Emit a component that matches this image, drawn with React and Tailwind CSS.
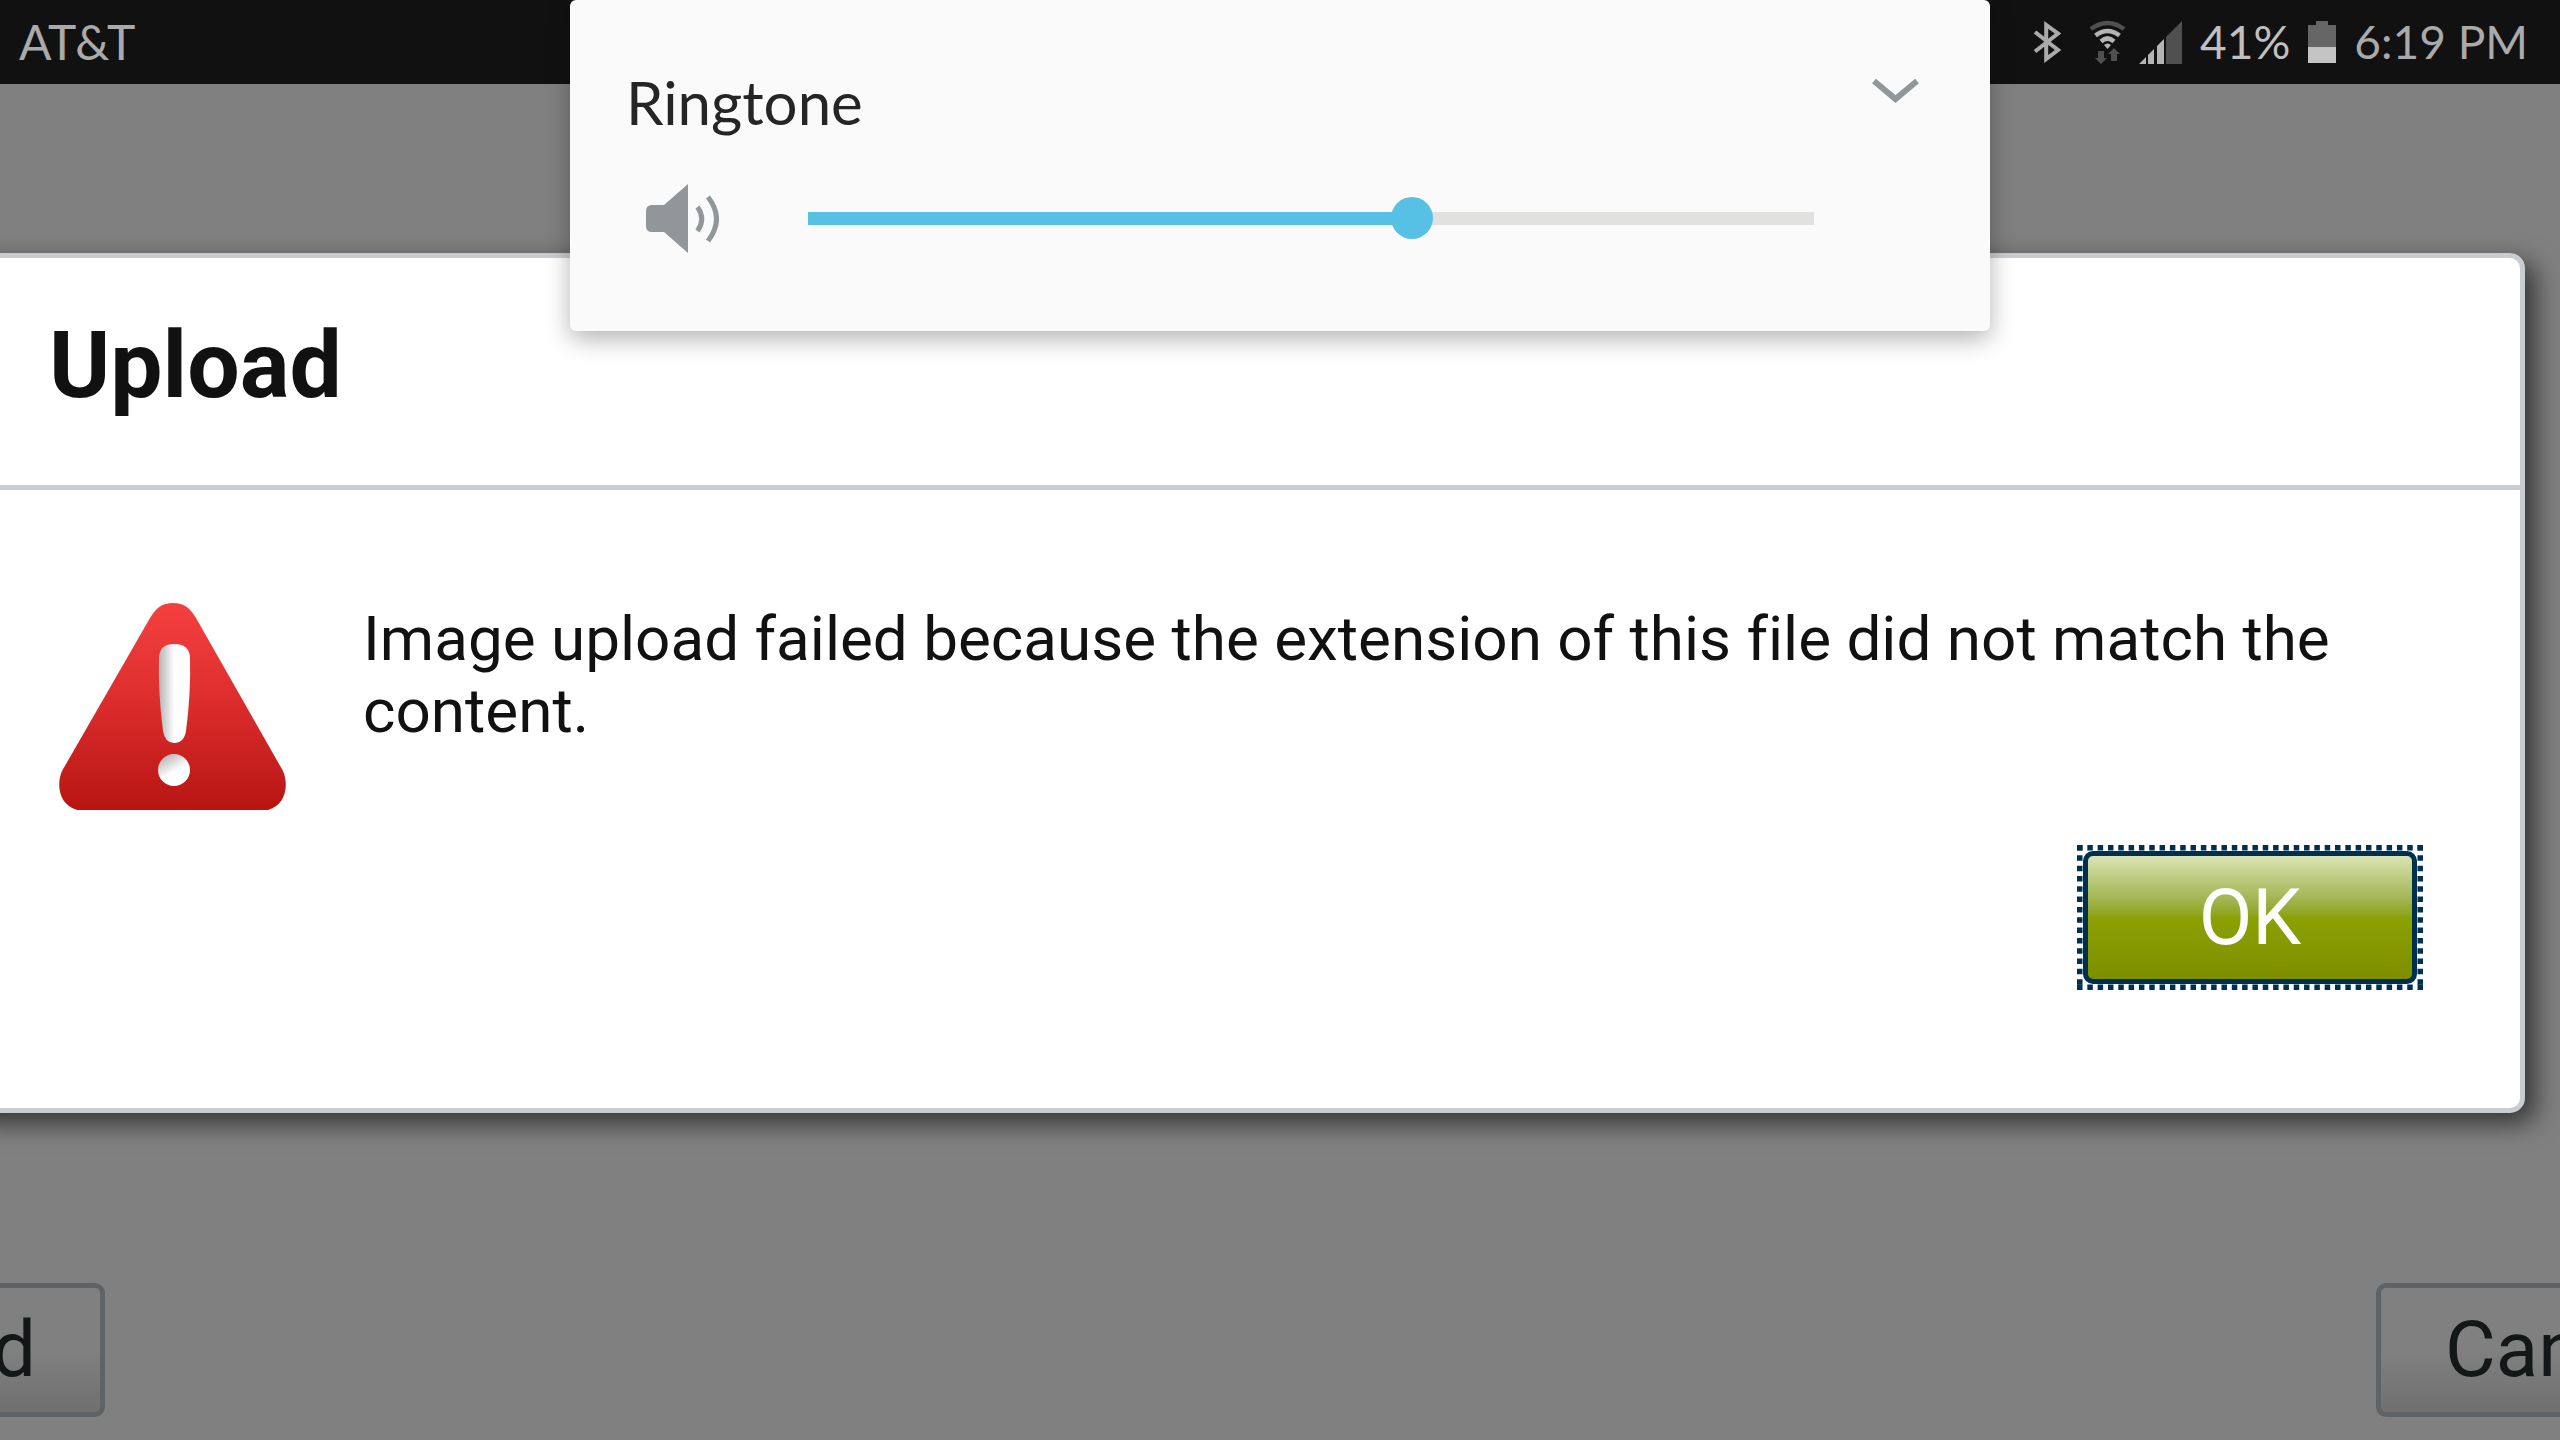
import { useState } from "react";

const STEPS = 15;

function BluetoothIcon() {
  return (
    <svg className="w-[28px] h-[42px]" viewBox="0 0 28 42" fill="none" stroke="#aaaaaa" strokeWidth="4">
      <path d="M2 11 L25 29 L13.200 38 V4 L25 12.500 L2 30.500"/>
    </svg>
  );
}

function WifiIcon() {
  return (
    <svg className="w-[38px] h-[44px]" viewBox="0 0 38 44" fill="none" strokeWidth="4.600">
      <path d="M2 9 Q18.500 -3 35 9" stroke="#505050"/>
      <path d="M6.500 15.500 Q18.500 6.500 30.500 15.500" stroke="#b4b4b4"/>
      <path d="M12 21.500 Q18.500 15.500 25 21.500" stroke="#b4b4b4"/>
      <path d="M15 25 Q18.500 22 22 25 L18.500 29 Z" fill="#b4b4b4"/>
      <path d="M9 31 h6 v7 h3 l-6 6 l-6 -6 h3 Z" fill="#505050"/>
      <path d="M22 41 h6 v-7 h3 l-6 -6 l-6 6 h3 Z" fill="#505050"/>
    </svg>
  );
}

function SignalIcon() {
  return (
    <svg className="w-[43px] h-[43px]" viewBox="0 0 43 43">
      <path d="M0 43 L7 36 V43 Z" fill="#b4b4b4"/>
      <path d="M9 43 V34 L15 28 V43 Z" fill="#b4b4b4"/>
      <path d="M18 43 V25 L25 18 V43 Z" fill="#b4b4b4"/>
      <path d="M27 43 V16 L43 0 V43 Z" fill="#505050"/>
    </svg>
  );
}

function BatteryIcon() {
  return (
    <svg className="w-[28px] h-[42px]" viewBox="0 0 28 42">
      <path d="M8 0 H20 V4 H28 V26 H0 V4 H8 Z" fill="#666666"/>
      <path d="M0 26 H28 V42 H0 Z" fill="#c4c4c4"/>
    </svg>
  );
}

function SpeakerIcon() {
  return (
    <svg className="w-[73px] h-[69px] shrink-0" viewBox="0 0 73 69">
      <path d="M6 21 H18 L42 0 V69 L18 48 H6 Q0 48 0 42 V27 Q0 21 6 21 Z" fill="#919698"/>
      <path d="M51.500 23 Q60 35 51.500 47 M62 13 Q79 35 62 57" fill="none" stroke="#919698" strokeWidth="5"/>
    </svg>
  );
}

function WarningIcon() {
  return (
    <svg className="w-[227px] h-[207px] shrink-0" viewBox="0 0 227 207" role="img" aria-label="Error">
      <defs>
        <linearGradient id="warn" x1="0" y1="0" x2="0" y2="1">
          <stop offset="0" stopColor="#f64040"/>
          <stop offset="0.5" stopColor="#db2c2c"/>
          <stop offset="1" stopColor="#b71512"/>
        </linearGradient>
        <linearGradient id="mark" x1="0" y1="0" x2="1" y2="0">
          <stop offset="0" stopColor="#b4b4b4"/>
          <stop offset="0.5" stopColor="#ffffff"/>
        </linearGradient>
        <linearGradient id="dot" x1="0.2" y1="0" x2="0.6" y2="0.7">
          <stop offset="0" stopColor="#b0b0b0"/>
          <stop offset="0.8" stopColor="#ffffff"/>
        </linearGradient>
      </defs>
      <path d="M91 15 C97 5 103 0 114 0 S131 5 137 15 L224 168 C230 182 227 202 209 207 H18 C0 202 -3 182 3 168 Z" fill="url(#warn)"/>
      <path d="M100 54 Q101 41 115 41 Q130 41 131 54 Q132 90 127 128 Q125 140 115 140 Q106 140 104 128 Q99 90 100 54 Z" fill="url(#mark)"/>
      <circle cx="115" cy="167" r="16" fill="url(#dot)"/>
    </svg>
  );
}

function StatusBar() {
  return (
    <header className="flex h-[84px] items-center justify-between bg-[#111111] pl-[19px] pr-8 font-['Lato',sans-serif] text-[#aaaaaa]">
      <span className="text-[48px] leading-[60px]">AT&amp;T</span>
      <div className="flex items-center text-[46px] leading-[60px]">
        <BluetoothIcon/>
        <div className="ml-7"><WifiIcon/></div>
        <div className="ml-3"><SignalIcon/></div>
        <span className="ml-[18px] text-[#c0c0c0]">41%</span>
        <div className="ml-[18px]"><BatteryIcon/></div>
        <span className="ml-[18px]">6:19 PM</span>
      </div>
    </header>
  );
}

function VolumePanel() {
  const [volume, setVolume] = useState(9);
  return (
    <section className="absolute left-1/2 top-0 z-20 w-[1420px] -translate-x-1/2 rounded-[6px] bg-[#fafafa] pb-[78px] pt-[70px] shadow-[0_8px_24px_rgba(0,0,0,0.3)]">
      <div className="flex items-start justify-between pl-14 pr-[71px]">
        <label htmlFor="ringtone" className="font-['Lato',sans-serif] text-[60px] leading-[64px] text-[#252525]">Ringtone</label>
        <button type="button" aria-label="Expand" className="mt-2">
          <svg className="w-[47px] h-[26px]" viewBox="0 0 47 26" fill="none" stroke="#919698" strokeWidth="6">
            <path d="M2 3 L23.500 21 L45 3"/>
          </svg>
        </button>
      </div>
      <div className="mt-[50px] flex items-center pl-[76px] pr-[176px]">
        <SpeakerIcon/>
        <div className="relative ml-[89px] h-[13px] flex-1 bg-[#e1e1df]">
          <div className="h-full bg-[#57c0e5]" style={{width:`${(volume/STEPS)*100}%`}}/>
          <input id="ringtone" type="range" min="0" max={STEPS} value={volume}
            onChange={(e)=>setVolume(Number(e.target.value))}
            className="absolute -inset-x-[21px] -top-[15px] h-[42px] cursor-pointer appearance-none bg-transparent [&::-webkit-slider-thumb]:h-[42px] [&::-webkit-slider-thumb]:w-[42px] [&::-webkit-slider-thumb]:appearance-none [&::-webkit-slider-thumb]:rounded-full [&::-webkit-slider-thumb]:bg-[#57c0e5]"/>
        </div>
      </div>
    </section>
  );
}

function OkButton() {
  return (
    <div className="relative p-[6px]">
      <button type="button"
        className="block h-[133px] w-[334px] rounded-[10px] border-[5px] border-[#003050] bg-linear-to-b from-[#dbe3b2] via-[#8ba103] to-[#7d8f00] text-[78px] leading-[92px] text-white outline-none">
        OK
      </button>
      {/* square-dotted focus ring */}
      <svg className="pointer-events-none absolute inset-0 h-full w-full" viewBox="0 0 346 145" fill="none" stroke="#003050" strokeWidth="5.500">
        <path d="M0 2.750 H346 M0 142.250 H346" strokeDasharray="5.500 4.820"/>
        <path d="M2.750 0 V145 M343.250 0 V145" strokeDasharray="5.500 4.820"/>
      </svg>
    </div>
  );
}

function UploadDialog() {
  return (
    <section role="dialog" aria-labelledby="dialog-title"
      className="relative z-10 -ml-10 mr-[35px] mt-[169px] rounded-[15px] border-[5px] border-[#c9cdd1] bg-white pl-[35px] text-[#111111] shadow-[10px_10px_26px_rgba(0,0,0,0.6)]">
      <div className="border-b-[5px] border-[#c9cdd1] pb-[63px] pl-[49px] pt-[52px]">
        <h1 id="dialog-title" className="text-[93px] font-bold leading-[112px]">Upload</h1>
      </div>
      <div className="flex items-start gap-[77px] pl-[59px] pr-[103px] pt-[113px]">
        <WarningIcon/>
        <p className="text-[62px] leading-[72px] [font-variant-ligatures:none]">
          Image upload failed because the extension of this file did not match the content.
        </p>
      </div>
      <div className="flex justify-end pb-[118px] pr-[97px] pt-[35px]">
        <OkButton/>
      </div>
    </section>
  );
}

function PageButton({ children }) {
  return (
    <button type="button"
      className="h-[134px] shrink-0 rounded-[10px] border-[5px] border-[#5f6366] bg-linear-to-b from-[#808080] from-50% to-[#707070] px-16 text-[78px] leading-[92px] text-[#131717]">
      {children}
    </button>
  );
}

export default function App() {
  return (
    <div className="relative min-h-screen overflow-hidden bg-[#808080] font-['Roboto',sans-serif]">
      <StatusBar/>
      <VolumePanel/>
      <UploadDialog/>
      <footer className="mt-[170px] flex justify-between pb-[23px]">
        <div className="flex w-[105px] justify-end">
          <PageButton>Upload</PageButton>
        </div>
        <div className="flex w-[184px]">
          <PageButton>Cancel</PageButton>
        </div>
      </footer>
    </div>
  );
}
